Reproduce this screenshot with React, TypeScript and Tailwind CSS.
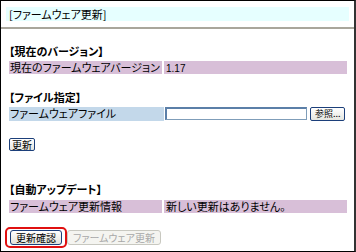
import React from 'react';

const jp = "font-['MS_UI_Gothic','Noto_Sans_CJK_JP',sans-serif] [font-feature-settings:'palt'] text-[11px] leading-[13px] text-black";

function SectionTitle({ children, className }: { children: React.ReactNode; className?: string }) {
  return <div className={`font-bold ${className ?? ''}`}>{children}</div>;
}

function Row({ label, value, tone }: { label: string; value?: React.ReactNode; tone: 'purple' | 'blue' }) {
  const bg = tone === 'purple' ? 'bg-[#d8bfd8]' : 'bg-[#c3d8ea]';
  return (
    <div className="flex gap-[2px]">
      <div className={`w-[153px] h-[13px] pl-[1px] ${bg}`}>{label}</div>
      <div className={`flex-1 h-[13px] pl-[2px] ${bg}`}>{value}</div>
    </div>
  );
}

export default function App() {
  return (
    <div className={`w-[356px] h-[252px] bg-white border border-black border-r-2 border-r-[#333] overflow-hidden ${jp}`}>
      {/* header */}
      <div className="mt-[6px] mx-[5px] h-[14px] bg-[#e6ffff] pl-[3px] leading-[14px]">[ファームウェア更新]</div>
      <div className="mt-[6px] h-[2px] bg-[#a9a69c]" />

      <div className="pl-[8px] pr-[7px]">
        {/* current version */}
        <SectionTitle className="mt-[16px] mb-[3px]">【現在のバージョン】</SectionTitle>
        <Row tone="purple" label="現在のファームウェアバージョン" value={<span className="font-['Liberation_Sans',sans-serif] text-[10px]">1.17</span>} />

        {/* file */}
        <SectionTitle className="mt-[17px] mb-[2px]">【ファイル指定】</SectionTitle>
        <div className="flex items-center h-[15px]">
          <div className="w-[155px] h-[14px] bg-[#c3d8ea] pl-[1px]">ファームウェアファイル</div>
          <input
            type="text"
            className="w-[142px] h-[13px] ml-[1px] bg-white border border-[#7f9db9] border-t-2 border-l-2 border-t-[#5b7fa8] border-l-[#5b7fa8] outline-none"
          />
          <button className="ml-[3px] w-[35px] h-[14px] border border-[#1c3f7a] rounded-[2px] bg-gradient-to-b from-white to-[#e6e6e0] text-[9px] leading-[12px] text-left pl-[4px]">
            参照...
          </button>
        </div>

        <button className="mt-[17px] w-[26px] h-[13px] border border-[#1c3f7a] rounded-[2px] bg-gradient-to-b from-white to-[#e6e6e0] text-[10px] leading-[11px]">
          更新
        </button>

        {/* auto update */}
        <SectionTitle className="mt-[32px] mb-[4px]">【自動アップデート】</SectionTitle>
        <Row tone="purple" label="ファームウェア更新情報" value="新しい更新はありません。" />

        <div className="mt-[14px] -ml-[4px] flex items-center">
          <div className="px-[3px] py-[1px] border-2 border-[#e01010] rounded-[5px]">
            <button className="w-[52px] h-[15px] border border-[#1c3f7a] rounded-[3px] bg-gradient-to-b from-white to-[#e2e2da] text-[10px] leading-[13px]">
              更新確認
            </button>
          </div>
          <button disabled className="w-[94px] h-[15px] border border-[#c8c8c0] rounded-[3px] bg-[#f4f4f0] text-[10px] leading-[13px] text-[#a8a8a8]">
            ファームウェア更新
          </button>
        </div>
      </div>
    </div>
  );
}
